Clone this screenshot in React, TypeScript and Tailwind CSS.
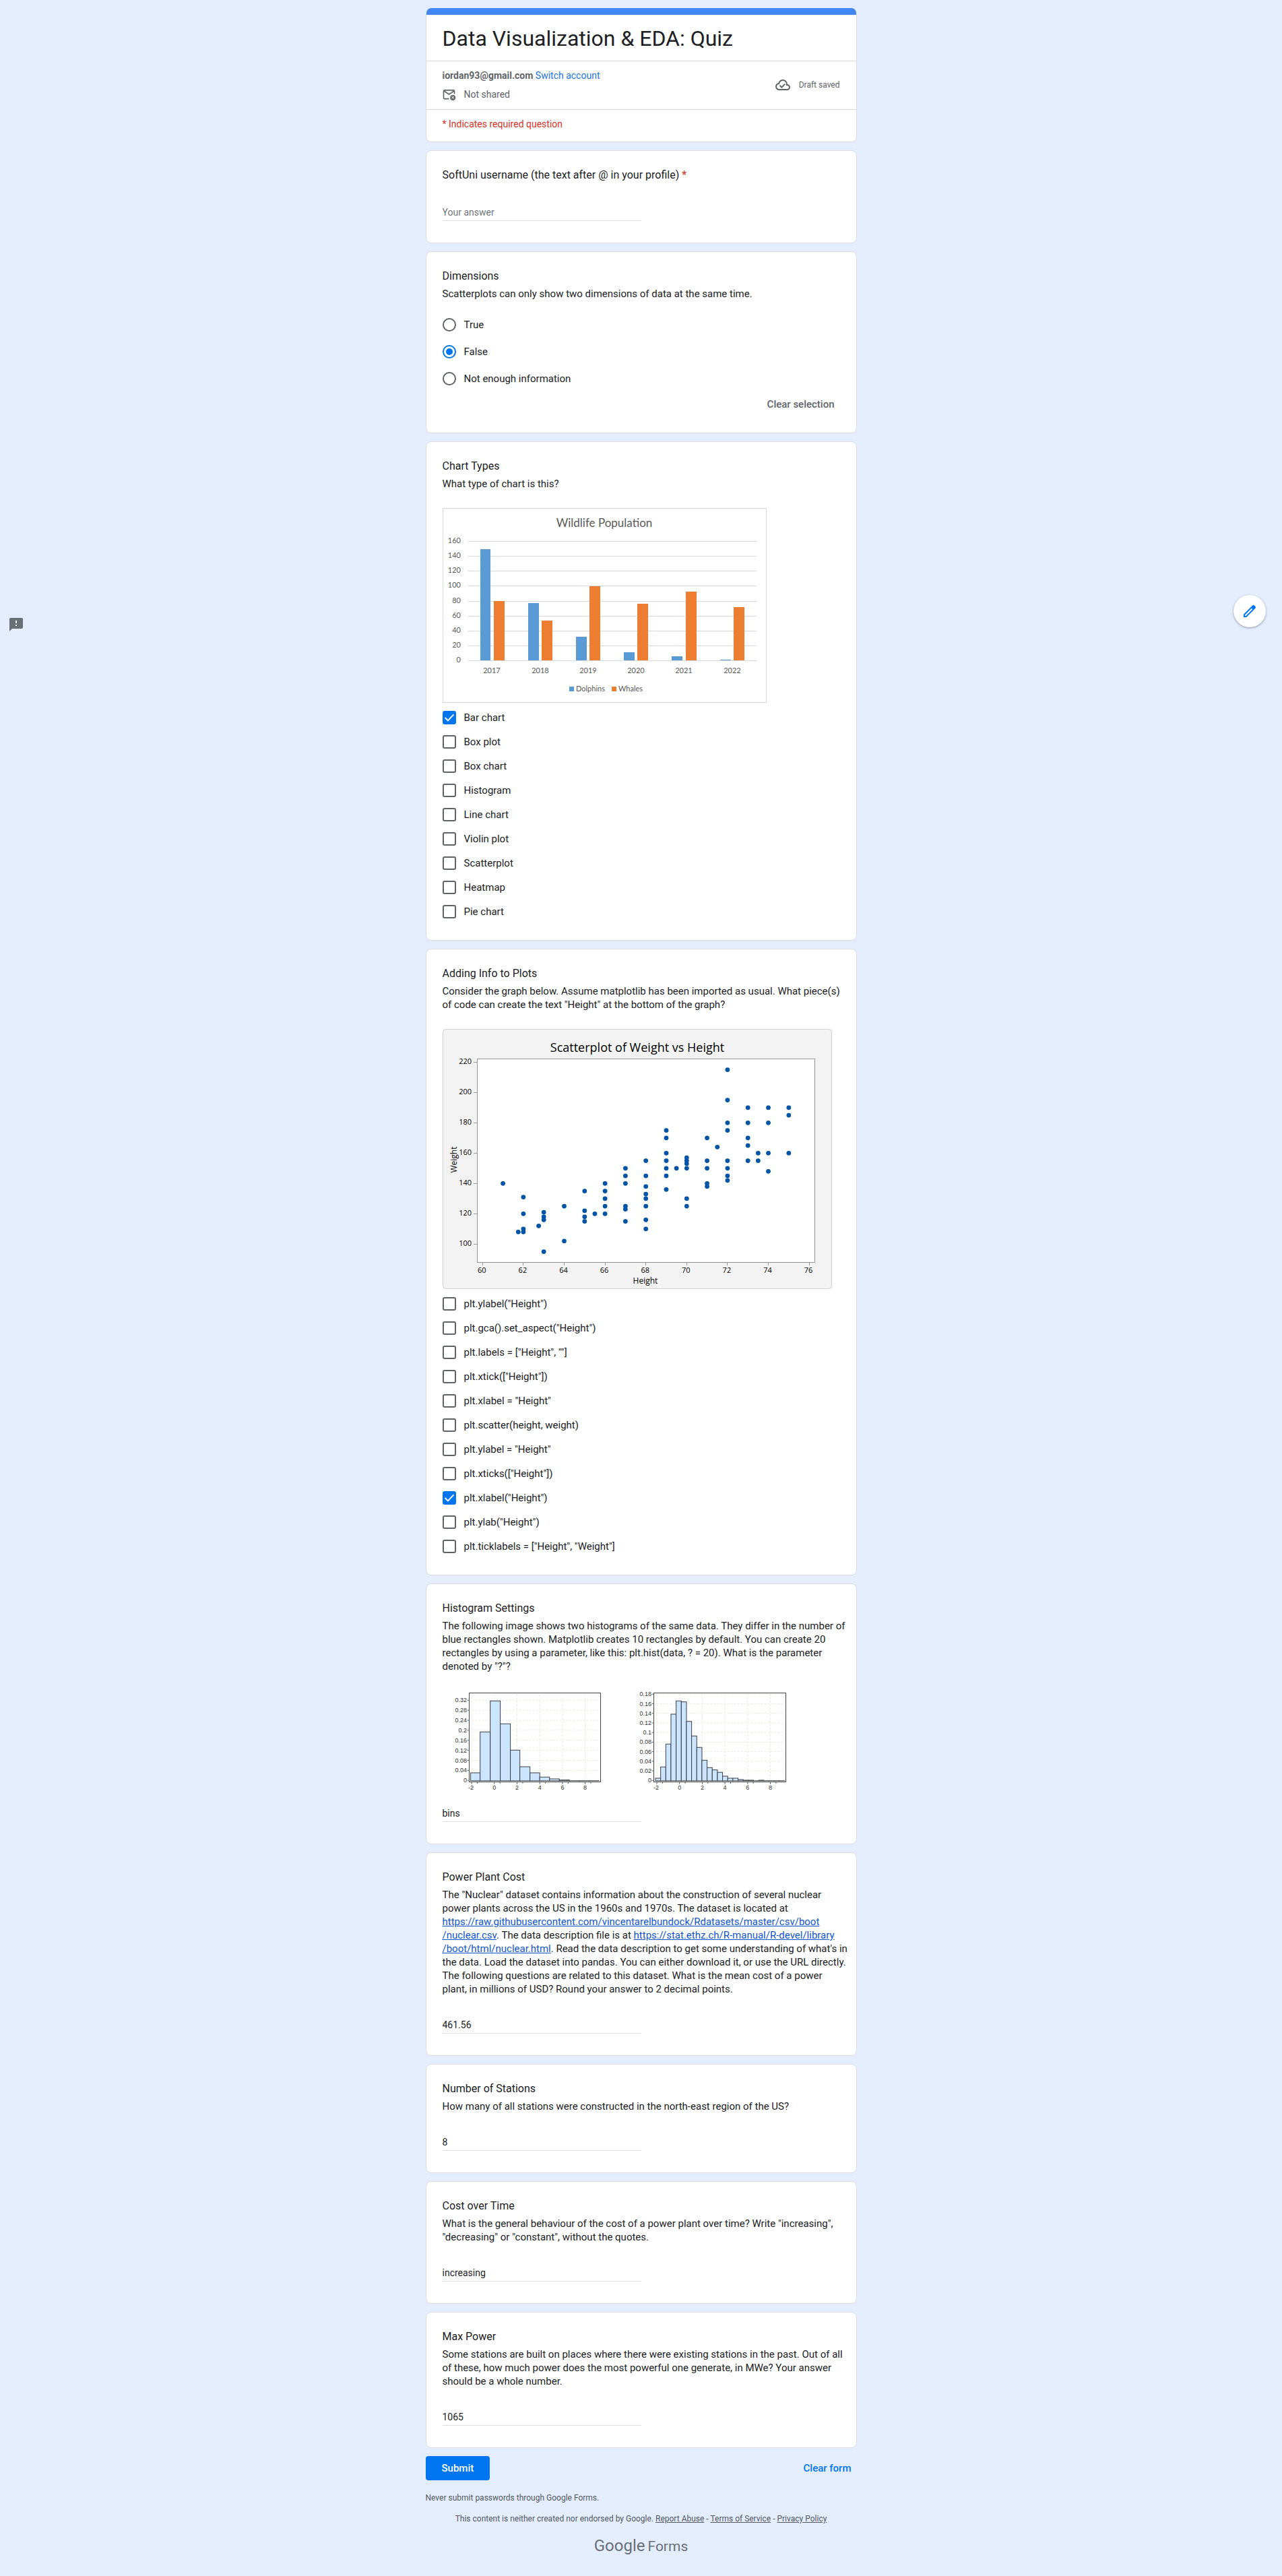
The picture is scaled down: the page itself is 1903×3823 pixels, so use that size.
import React, { useId } from "react";

const ACCENT_RING = "focus-visible:outline-2 focus-visible:outline-offset-2 focus-visible:outline-[#0075f0]";

function Card({ children }: { children: React.ReactNode }) {
  return (
    <section className="rounded-lg border border-[#dadce0] bg-white px-6 py-6">{children}</section>
  );
}

function Question({ title, id, children }: { title: string; id?: string; children?: React.ReactNode }) {
  return (
    <>
      <h2 id={id} className="text-base leading-6">
        {title}
      </h2>
      {children && <p className="mt-1 -mr-3 text-[15px] leading-5">{children}</p>}
    </>
  );
}

function TextAnswer({ labelledBy, value, className }: { labelledBy: string; value?: string; className: string }) {
  return (
    <div className={className}>
      <input
        type="text"
        aria-labelledby={labelledBy}
        defaultValue={value}
        placeholder="Your answer"
        className="mb-2 block h-[25px] w-1/2 border-b border-[#dcdcdc] bg-transparent text-sm text-[#202124] outline-none placeholder:text-[#70757a] focus:border-[#0075f0]"
      />
    </div>
  );
}

function TextQuestion({ title, value, children }: { title: string; value: string; children: React.ReactNode }) {
  const id = useId();
  return (
    <Card>
      <Question title={title} id={id}>
        {children}
      </Question>
      <TextAnswer labelledBy={id} value={value} className="mt-[31px]" />
    </Card>
  );
}

function CheckOption({ label, checked }: { label: string; checked?: boolean }) {
  return (
    <label className="flex h-9 items-center gap-3 text-[15px] leading-5">
      <span className="relative flex size-5 shrink-0">
        <input
          type="checkbox"
          defaultChecked={checked}
          className={`peer size-5 appearance-none rounded-[3px] border-2 border-[#5f6368] checked:border-[#0075f0] checked:bg-[#0075f0] ${ACCENT_RING}`}
        />
        <svg
          viewBox="0 0 20 20"
          className="pointer-events-none absolute inset-0 hidden size-5 peer-checked:block"
          fill="none"
          stroke="#fff"
          strokeWidth="2"
        >
          <path d="M3.6 10 L8 14.4 L16.4 5.4" />
        </svg>
      </span>
      {label}
    </label>
  );
}

function RadioOption({ label, checked }: { label: string; checked?: boolean }) {
  return (
    <label className="flex h-10 items-center gap-3 text-[15px] leading-5">
      <span className="relative flex size-5 shrink-0">
        <input
          type="radio"
          name="dimensions"
          defaultChecked={checked}
          className={`peer size-5 appearance-none rounded-full border-2 border-[#5f6368] checked:border-[#0075f0] ${ACCENT_RING}`}
        />
        <span className="pointer-events-none absolute inset-[5px] hidden rounded-full bg-[#0075f0] peer-checked:block" />
      </span>
      {label}
    </label>
  );
}

const wildlife = [
  { year: "2017", cx: 73, blue: [56, 15, 61], orange: [76, 16, 138] },
  { year: "2018", cx: 145, blue: [127, 16, 141], orange: [147, 16, 167] },
  { year: "2019", cx: 216, blue: [198, 16, 191], orange: [218, 16, 116] },
  { year: "2020", cx: 287, blue: [269, 16, 214], orange: [289, 16, 142] },
  { year: "2021", cx: 358, blue: [340, 16, 220], orange: [361, 16, 124] },
  { year: "2022", cx: 430, blue: [412, 16, 225], orange: [432, 16, 147] },
];

function WildlifeChart() {
  const rows = [49, 71, 93, 115, 138, 160, 182, 204, 226];
  return (
    <svg
      role="img"
      aria-label="Wildlife Population bar chart"
      viewBox="0 0 481 289"
      className="mt-[26px] mb-1 block w-[481px] max-w-full"
      fontFamily="Lato, sans-serif"
      fill="#595959"
    >
      <rect x="0.5" y="0.5" width="480" height="288" fill="#fff" stroke="#d9d9d9" />
      <text x="240" y="28" fontSize="17" textAnchor="middle">
        Wildlife Population
      </text>
      {rows.map((y, i) => (
        <g key={y}>
          <rect x="38" y={y} width="428" height="1" fill="#d9d9d9" />
          <text x="27" y={y + 3} fontSize="11" textAnchor="end">
            {160 - i * 20}
          </text>
        </g>
      ))}
      {wildlife.map((d) => (
        <g key={d.year}>
          <rect x={d.blue[0]} y={d.blue[2]} width={d.blue[1]} height={226 - d.blue[2]} fill="#5b9bd5" />
          <rect x={d.orange[0]} y={d.orange[2]} width={d.orange[1]} height={226 - d.orange[2]} fill="#ed7d31" />
          <text x={d.cx} y="245" fontSize="11" textAnchor="middle">
            {d.year}
          </text>
        </g>
      ))}
      <rect x="188" y="265" width="7" height="7" fill="#5b9bd5" />
      <text x="198" y="272" fontSize="11">
        Dolphins
      </text>
      <rect x="251" y="265" width="7" height="7" fill="#ed7d31" />
      <text x="261" y="272" fontSize="11">
        Whales
      </text>
    </svg>
  );
}

const people: [number, number[]][] = [
  [61, [140]],
  [61.75, [108]],
  [62, [131, 120, 110, 108]],
  [62.75, [112]],
  [63, [121, 118, 116, 95]],
  [64, [125, 102]],
  [65, [135, 122, 118, 115]],
  [65.5, [120]],
  [66, [140, 135, 130, 125, 120]],
  [67, [150, 145, 140, 125, 123, 115]],
  [68, [155, 145, 138, 133, 130, 125, 116, 110]],
  [69, [175, 170, 160, 155, 150, 145, 136]],
  [69.5, [150]],
  [70, [157, 155, 153, 150, 130, 125]],
  [71, [170, 155, 150, 140, 138]],
  [71.5, [164]],
  [72, [215, 195, 180, 175, 155, 150, 145, 142]],
  [73, [190, 180, 170, 165, 155]],
  [73.5, [160, 155]],
  [74, [190, 180, 160, 148]],
  [75, [190, 185, 160]],
];

function ScatterChart() {
  const sx = (v: number) => 59.3 + (v - 60) * 30.3;
  const sy = (v: number) => 319.3 - (v - 100) * 2.25;
  return (
    <svg
      role="img"
      aria-label="Scatterplot of Weight vs Height"
      viewBox="0 0 578 386"
      className="mt-[26px] mb-1 block w-[578px] max-w-full"
      fontFamily="'Open Sans', 'Noto Sans', sans-serif"
      fill="#000"
    >
      <rect x="0.5" y="0.5" width="577" height="385" rx="4" fill="#f3f3f3" stroke="#cfcfcf" />
      <text x="289" y="34" fontSize="18" textAnchor="middle">
        Scatterplot of Weight vs Height
      </text>
      <rect x="51.5" y="44.5" width="501" height="302" fill="#fff" stroke="#969696" />
      {[100, 120, 140, 160, 180, 200, 220].map((v) => (
        <g key={v}>
          <path d={`M46 ${Math.floor(sy(v)) + 0.5}H51`} stroke="#969696" />
          <text x="43" y={sy(v) + 3} fontSize="11" textAnchor="end">
            {v}
          </text>
        </g>
      ))}
      {[60, 62, 64, 66, 68, 70, 72, 74, 76].map((v) => (
        <g key={v}>
          <path d={`M${Math.floor(sx(v)) + 0.5} 347V351`} stroke="#969696" />
          <text x={sx(v) - 1} y="362" fontSize="11" textAnchor="middle">
            {v}
          </text>
        </g>
      ))}
      <text x="301" y="378" fontSize="12" textAnchor="middle">
        Height
      </text>
      <text transform="translate(21 194) rotate(-90)" fontSize="12" textAnchor="middle">
        Weight
      </text>
      {people.flatMap(([h, weights]) =>
        weights.map((w) => <circle key={`${h}-${w}`} cx={sx(h)} cy={sy(w)} r="3.4" fill="#0054a6" />),
      )}
    </svg>
  );
}

const coarseEdges = [41.6, 55.7, 70.7, 85.6, 100.6, 114.7, 129.7, 144.2, 158.7, 173.3, 188.2, 203, 217.6, 232];
const coarseTops = [122, 61.3, 15.3, 49.3, 88.3, 113, 122, 128.3, 131, 132.7, 133.7, 133.7, 133.7];
const fineTops = [
  130, 113.3, 79.3, 35, 15.3, 16.7, 45.7, 67.3, 84.3, 103.3, 114.3, 117.7, 121.3, 127, 130, 130, 132, 133, 133, 133.7,
  133, 133.7, 133.7, 133.7, 133.7,
];
const fineEdges = Array.from({ length: 26 }, (_, i) => 316 + i * 7.66);

function Histogram({
  left,
  width,
  edges,
  tops,
  zero,
  labels,
  firstY,
  labelX,
}: {
  left: number;
  width: number;
  edges: number[];
  tops: number[];
  zero: number;
  labels: string[];
  firstY: number;
  labelX: number;
}) {
  const step = (133.3 - firstY) / (labels.length - 1);
  return (
    <g>
      <rect x={left} y="3.5" width={width} height="132" fill="#fff" stroke="#444" />
      {labels.map((t, i) => {
        const y = firstY + i * step;
        return (
          <g key={t}>
            <path d={`M${left + 4} ${y}H${left + width - 2}`} stroke="#ecebdf" strokeDasharray="3 2" />
            <path d={`M${left - 3} ${y}H${left}`} stroke="#666" />
            <text x={labelX} y={y + 3} fontSize="9" textAnchor="end">
              {t}
            </text>
          </g>
        );
      })}
      {[-2, 0, 2, 4, 6, 8].map((v) => {
        const x = zero + v * 16.85;
        return (
          <g key={v}>
            <path d={`M${x} 5V133`} stroke="#ecebdf" strokeDasharray="3 2" />
            <path d={`M${x} 136V139M${x + 8.4} 136V138`} stroke="#666" />
            <text x={v < 0 ? x - 1 : x} y="147" fontSize="9" textAnchor="middle">
              {v}
            </text>
          </g>
        );
      })}
      {tops.map((top, i) => (
        <rect
          key={i}
          x={edges[i]}
          y={top}
          width={edges[i + 1] - edges[i]}
          height={133.8 - top}
          fill="#cce5ff"
          stroke="#3a3f45"
        />
      ))}
    </g>
  );
}

function Histograms() {
  return (
    <svg
      role="img"
      aria-label="Two histograms of the same data"
      viewBox="0 0 520 150"
      className="mt-[26px] block w-[520px] max-w-full"
      fontFamily="'Liberation Sans', sans-serif"
      fill="#333"
    >
      <Histogram
        left={39.5}
        width={195}
        edges={coarseEdges}
        tops={coarseTops}
        zero={76.8}
        labels={["0.32", "0.28", "0.24", "0.2", "0.16", "0.12", "0.08", "0.04", "0"]}
        firstY={14.3}
        labelX={36}
      />
      <Histogram
        left={313.5}
        width={196}
        edges={fineEdges}
        tops={fineTops}
        zero={351.7}
        labels={["0.18", "0.16", "0.14", "0.12", "0.1", "0.08", "0.06", "0.04", "0.02", "0"]}
        firstY={5.3}
        labelX={310}
      />
    </svg>
  );
}

function Header() {
  return (
    <header className="overflow-hidden rounded-lg border border-t-0 border-[#dadce0] bg-white">
      <div className="h-[10px] bg-[#4285f4]" />
      <h1 className="px-6 pt-[15px] pb-[13px] text-[32px] leading-10">Data Visualization &amp; EDA: Quiz</h1>
      <div className="flex items-center justify-between border-y border-[#dadce0] px-6 pt-[11px] pb-3 text-[#5f6368]">
        <div className="text-sm leading-5">
          <div>
            <span className="font-bold">iordan93@gmail.com</span>{" "}
            <a href="#switch" className="text-[#1a73e8]">
              Switch account
            </a>
          </div>
          <div className="mt-2 flex items-center gap-3">
            <svg viewBox="0 0 20 20" className="size-5" fill="none" stroke="#5f6368" strokeWidth="1.6">
              <path d="M9.5 16.6H2.8a1.3 1.3 0 0 1-1.3-1.3V5.2a1.3 1.3 0 0 1 1.3-1.3h13.4a1.3 1.3 0 0 1 1.3 1.3V9.5" />
              <path d="M2 5 L9.5 10 L17 5" />
              <circle cx="15.2" cy="15" r="4" fill="#5f6368" stroke="none" />
              <path d="M13.6 13.4l3.2 3.2M16.8 13.4l-3.2 3.2" stroke="#fff" strokeWidth="1.1" />
            </svg>
            Not shared
          </div>
        </div>
        <div className="flex items-center gap-3 text-xs leading-4">
          <svg viewBox="0 -960 960 960" className="size-6" fill="#5f6368">
            <path d="m414-280 226-226-58-58-169 169-84-84-57 57 142 142ZM260-160q-91 0-155.5-63T40-377q0-78 47-139t123-78q25-92 100-149t170-57q117 0 198.5 81.5T760-520q69 8 114.5 59.5T920-340q0 75-52.5 127.5T740-160H260Zm0-80h480q42 0 71-29t29-71q0-42-29-71t-71-29h-60v-80q0-83-58.5-141.5T480-720q-83 0-141.5 58.5T280-520h-20q-58 0-99 41t-41 99q0 58 41 99t99 41Z" />
          </svg>
          Draft saved
        </div>
      </div>
      <p className="px-6 pt-[11px] pb-4 text-sm leading-5 text-[#d93025]">* Indicates required question</p>
    </header>
  );
}

export default function App() {
  return (
    <div className="relative min-h-screen bg-[#e3edfd] pb-4 font-[Roboto,sans-serif] text-[#202124]">
      <form className="mx-auto flex w-full max-w-[640px] flex-col gap-3 pt-3" onSubmit={(e) => e.preventDefault()}>
        <Header />

        <Card>
          <h2 id="username" className="text-base leading-6">
            SoftUni username (the text after @ in your profile) <span className="text-[#d93025]">*</span>
          </h2>
          <TextAnswer labelledBy="username" className="mt-[31px]" />
        </Card>

        <Card>
          <Question title="Dimensions">Scatterplots can only show two dimensions of data at the same time.</Question>
          <div className="mt-4">
            <RadioOption label="True" />
            <RadioOption label="False" checked />
            <RadioOption label="Not enough information" />
          </div>
          <div className="flex justify-end">
            <button type="button" className="h-9 px-2 text-[15px] leading-5 font-medium text-[#5f6368]">
              Clear selection
            </button>
          </div>
        </Card>

        <Card>
          <Question title="Chart Types">What type of chart is this?</Question>
          <WildlifeChart />
          <CheckOption label="Bar chart" checked />
          <CheckOption label="Box plot" />
          <CheckOption label="Box chart" />
          <CheckOption label="Histogram" />
          <CheckOption label="Line chart" />
          <CheckOption label="Violin plot" />
          <CheckOption label="Scatterplot" />
          <CheckOption label="Heatmap" />
          <CheckOption label="Pie chart" />
        </Card>

        <Card>
          <Question title="Adding Info to Plots">
            Consider the graph below. Assume matplotlib has been imported as usual. What piece(s) of code can create the
            text "Height" at the bottom of the graph?
          </Question>
          <ScatterChart />
          <CheckOption label={'plt.ylabel("Height")'} />
          <CheckOption label={'plt.gca().set_aspect("Height")'} />
          <CheckOption label={'plt.labels = ["Height", ""]'} />
          <CheckOption label={'plt.xtick(["Height"])'} />
          <CheckOption label={'plt.xlabel = "Height"'} />
          <CheckOption label="plt.scatter(height, weight)" />
          <CheckOption label={'plt.ylabel = "Height"'} />
          <CheckOption label={'plt.xticks(["Height"])'} />
          <CheckOption label={'plt.xlabel("Height")'} checked />
          <CheckOption label={'plt.ylab("Height")'} />
          <CheckOption label={'plt.ticklabels = ["Height", "Weight"]'} />
        </Card>

        <Card>
          <Question title="Histogram Settings" id="histogram">
            The following image shows two histograms of the same data. They differ in the number of blue rectangles
            shown. Matplotlib creates 10 rectangles by default. You can create 20 rectangles by using a parameter, like
            this: plt.hist(data, ? = 20). What is the parameter denoted by "?"?
          </Question>
          <Histograms />
          <TextAnswer labelledBy="histogram" value="bins" className="mt-5" />
        </Card>

        <TextQuestion title="Power Plant Cost" value="461.56">
          The "Nuclear" dataset contains information about the construction of several nuclear power plants across the
          US in the 1960s and 1970s. The dataset is located at{" "}
          <a
            href="https://raw.githubusercontent.com/vincentarelbundock/Rdatasets/master/csv/boot/nuclear.csv"
            className="text-[#1155cc] underline"
          >
            https://raw.githubusercontent.com/vincentarelbundock/Rdatasets/master/csv/boot
            <wbr />
            /nuclear.csv
          </a>
          . The data description file is at{" "}
          <a
            href="https://stat.ethz.ch/R-manual/R-devel/library/boot/html/nuclear.html"
            className="text-[#1155cc] underline"
          >
            https://stat.ethz.ch/R-manual/R-devel/library
            <wbr />
            /boot/html/nuclear.html
          </a>
          . Read the data description to get some understanding of what's in the data. Load the dataset into pandas. You
          can either download it, or use the URL directly. The following questions are related to this dataset. What is
          the mean cost of a power plant, in millions of USD? Round your answer to 2 decimal points.
        </TextQuestion>

        <TextQuestion title="Number of Stations" value="8">
          How many of all stations were constructed in the north-east region of the US?
        </TextQuestion>

        <TextQuestion title="Cost over Time" value="increasing">
          What is the general behaviour of the cost of a power plant over time? Write "increasing", "decreasing" or
          "constant", without the quotes.
        </TextQuestion>

        <TextQuestion title="Max Power" value="1065">
          Some stations are built on places where there were existing stations in the past. Out of all of these, how
          much power does the most powerful one generate, in MWe? Your answer should be a whole number.
        </TextQuestion>

        <div className="flex items-center justify-between">
          <button type="submit" className="h-9 rounded bg-[#0075f0] px-6 text-[15px] leading-5 font-medium text-white">
            Submit
          </button>
          <button type="reset" className="h-9 px-2 text-[15px] leading-5 font-medium text-[#0075f0]">
            Clear form
          </button>
        </div>
      </form>

      <footer className="mx-auto w-full max-w-[640px] text-xs leading-4 text-[#54585d]">
        <p className="pt-[18px]">Never submit passwords through Google Forms.</p>
        <p className="pt-[15px] text-center">
          This content is neither created nor endorsed by Google.{" "}
          <a href="#abuse" className="underline">
            Report Abuse
          </a>{" "}
          -{" "}
          <a href="#terms" className="underline">
            Terms of Service
          </a>{" "}
          -{" "}
          <a href="#privacy" className="underline">
            Privacy Policy
          </a>
        </p>
        <a href="#forms" className="mt-4 flex items-baseline justify-center gap-1 leading-8 text-[#6a6f75]">
          <span className="text-2xl leading-8">Google</span>
          <span className="text-[21px] leading-8">Forms</span>
        </a>
      </footer>

      <button
        type="button"
        aria-label="Edit this form"
        className="absolute top-[883px] right-6 flex size-12 items-center justify-center rounded-full bg-white shadow-[0_1px_3px_rgba(60,64,67,0.5)]"
      >
        <svg viewBox="0 0 24 24" className="size-6" fill="#0075f0">
          <path d="M20.41 4.94l-1.35-1.35c-.78-.78-2.05-.78-2.83 0L3 16.82V21h4.18L20.41 7.77c.79-.78.79-2.05 0-2.83zm-14 14.12L5 19v-1.36l9.82-9.82 1.41 1.41-9.82 9.83z" />
        </svg>
      </button>

      <button type="button" aria-label="Report a problem" className="absolute top-[915px] left-3 size-6">
        <svg viewBox="0 0 24 24" className="size-6" fill="#6a6f75">
          <path d="M20 2H4c-1.1 0-2 .9-2 2v18l4-4h14c1.1 0 2-.9 2-2V4c0-1.1-.9-2-2-2zm-7 12h-2v-2h2v2zm0-4h-2V6h2v4z" />
        </svg>
      </button>
    </div>
  );
}
